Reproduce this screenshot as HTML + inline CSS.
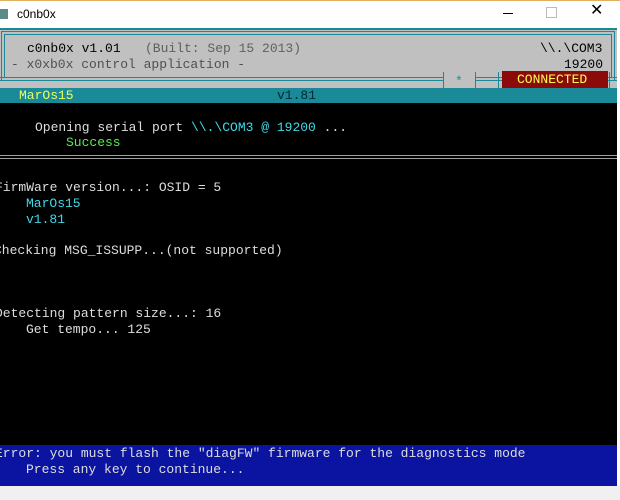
<!DOCTYPE html>
<html><head><style>
*{margin:0;padding:0}
body{width:620px;height:500px;position:relative;overflow:hidden;background:#fff;font-family:"Liberation Mono",monospace;font-size:13px;}
.t{position:absolute;white-space:pre;line-height:16px;}
.a{position:absolute}
</style></head><body>
<div class="a" style="left:0;top:0;width:620px;height:28px;background:#fff;border-top:1px solid #e0b060"></div>
<div class="a" style="left:0;top:9px;width:8px;height:10px;background:#5a8a8a"></div>
<div class="t" style="left:17px;top:6px;font-family:'Liberation Sans',sans-serif;font-size:12px;color:#000">c0nb0x</div>
<div class="a" style="left:503px;top:13px;width:10px;height:1px;background:#000"></div>
<div class="a" style="left:546px;top:7px;width:9px;height:9px;border:1px solid #bbb"></div>
<div class="t" style="left:590px;top:3px;font-family:'Liberation Sans',sans-serif;font-size:16px;color:#000">✕</div>
<div class="a" style="left:0;top:28px;width:617px;height:458px;background:#000"></div>
<div class="a" style="left:0;top:28px;width:617px;height:75px;background:#1b8a98"></div>
<div class="a" style="left:0;top:30px;width:617px;height:58px;background:#c0c0c0"></div>
<!-- frame -->
<div class="a" style="left:1px;top:31px;width:612px;height:49px;border:1px solid #1b8a98;border-bottom:none"></div>
<div class="a" style="left:4px;top:34px;width:606px;height:43px;border:1px solid #1b8a98;border-bottom:none"></div>
<div class="a" style="left:0;top:77px;width:617px;height:1px;background:#1b8a98"></div>
<div class="a" style="left:0;top:80px;width:617px;height:1px;background:#1b8a98"></div>
<div class="a" style="left:444px;top:74px;width:31px;height:14px;background:#c0c0c0"></div>
<div class="a" style="left:443px;top:72px;width:1px;height:16px;background:#1b8a98"></div>
<div class="a" style="left:475px;top:72px;width:1px;height:16px;background:#1b8a98"></div>
<div class="a" style="left:498px;top:72px;width:1px;height:16px;background:#1b8a98"></div>
<div class="a" style="left:609px;top:72px;width:1px;height:16px;background:#1b8a98"></div>
<div class="t" style="left:455px;top:74px;color:#1b8a98">*</div>
<div class="a" style="left:502px;top:71px;width:106px;height:17px;background:#8b0a0a"></div>
<div class="t" style="left:517px;top:72px;color:#ffff50">CONNECTED</div>
<div class="t" style="left:27px;top:41px;color:#000">c0nb0x v1.01</div>
<div class="t" style="left:145px;top:41px;color:#606060">(Built: Sep 15 2013)</div>
<div class="t" style="left:11px;top:57px;color:#505050">- x0xb0x control application -</div>
<div class="t" style="left:540px;top:41px;color:#000">\\.\COM3</div>
<div class="t" style="left:564px;top:57px;color:#000">19200</div>
<div class="t" style="left:19px;top:88px;color:#e8ff60">MarOs15</div>
<div class="t" style="left:277px;top:88px;color:#002830">v1.81</div>
<div class="t" style="left:35px;top:120px;color:#ddd">Opening serial port <span style="color:#40d8e8">\\.\COM3 @ 19200</span> ...</div>
<div class="t" style="left:66px;top:135px;color:#50f050">Success</div>
<div class="a" style="left:0;top:155px;width:617px;height:1px;background:#a0a0a0"></div>
<div class="a" style="left:0;top:158px;width:617px;height:1px;background:#a0a0a0"></div>
<div class="t" style="left:-5px;top:180px;color:#ddd">FirmWare version...: OSID = 5</div>
<div class="t" style="left:26px;top:196px;color:#40d8e8">MarOs15</div>
<div class="t" style="left:26px;top:212px;color:#40d8e8">v1.81</div>
<div class="t" style="left:-6px;top:243px;color:#ddd">Checking MSG_ISSUPP...(not supported)</div>
<div class="t" style="left:-5px;top:306px;color:#ddd">Detecting pattern size...: 16</div>
<div class="t" style="left:26px;top:322px;color:#ddd">Get tempo... 125</div>
<div class="a" style="left:0;top:445px;width:617px;height:41px;background:#0a14a0"></div>
<div class="t" style="left:-5px;top:446px;color:#ddd">Error: you must flash the "diagFW" firmware for the diagnostics mode</div>
<div class="t" style="left:26px;top:462px;color:#ddd">Press any key to continue...</div>
<div class="a" style="left:0;top:486px;width:620px;height:14px;background:#f0f0f0"></div>
</body></html>
